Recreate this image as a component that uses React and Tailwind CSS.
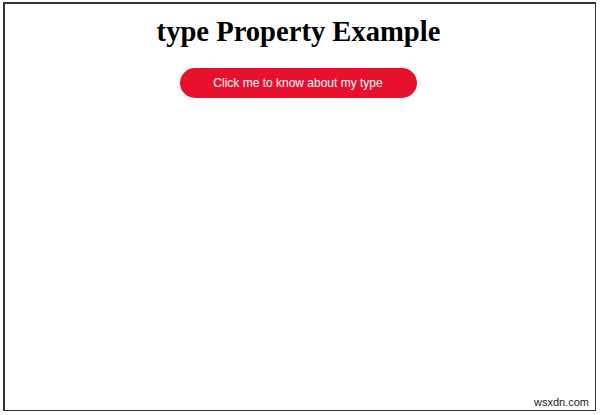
export default function App() {
  return (
    <div className="w-[600px] h-[415px] bg-white p-[2px_4px_4px_3px]">
      <div className="relative w-full h-full border border-[#333] border-l-2 border-t-2 bg-white flex flex-col items-center">
        <h1 className="mt-[11px] -ml-[3px] text-[28.6px] leading-[34px] font-bold text-black font-['Liberation_Serif',serif]">
          type Property Example
        </h1>
        <button className="mt-[19px] -ml-[4px] w-[237px] h-[30px] rounded-full bg-[#e8112d] text-white text-[12px] font-['Liberation_Sans',sans-serif]">
          Click me to know about my type
        </button>
        <span className="absolute right-[6px] bottom-[0px] text-[11px] leading-[16px] text-[#222] font-['Liberation_Sans',sans-serif]">
          wsxdn.com
        </span>
      </div>
    </div>
  );
}
